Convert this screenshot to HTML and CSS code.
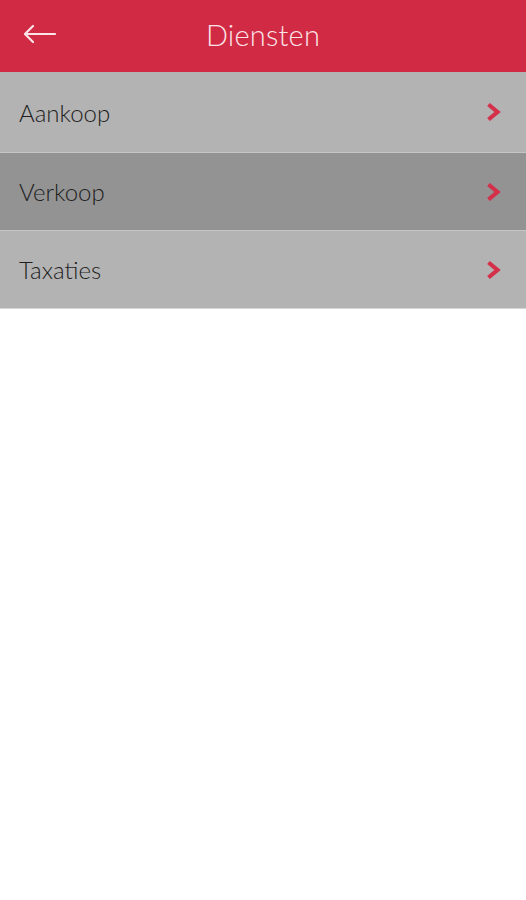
FILE: index.html
```html
<!DOCTYPE html>
<html>
<head>
  <title>Diensten</title>
  <link rel="stylesheet" href="styles.css">
</head>
<body>

<div class="topbar">
  <span class="back">
    <svg width="32" height="20" viewBox="0 0 32 20">
      <path d="M1 10 H31 M1 10 L9 2 M1 10 L9 18" stroke="#fbe3e7" stroke-width="2.2" fill="none" stroke-linecap="round"/>
    </svg>
  </span>
  <h1>Diensten</h1>
</div>

<div class="list">
  <div class="item">
    <span>Aankoop</span>
    <svg class="chev" width="15" height="20" viewBox="0 0 15 20"><path d="M2.5 2.5 L11.5 10 L2.5 17.5" stroke="#d4304a" stroke-width="4.2" fill="none"/></svg>
  </div>
  <div class="item active">
    <span>Verkoop</span>
    <svg class="chev" width="15" height="20" viewBox="0 0 15 20"><path d="M2.5 2.5 L11.5 10 L2.5 17.5" stroke="#d4304a" stroke-width="4.2" fill="none"/></svg>
  </div>
  <div class="item">
    <span>Taxaties</span>
    <svg class="chev" width="15" height="20" viewBox="0 0 15 20"><path d="M2.5 2.5 L11.5 10 L2.5 17.5" stroke="#d4304a" stroke-width="4.2" fill="none"/></svg>
  </div>
</div>

</body>
</html>
```

FILE: styles.css
```css
body {
  margin: 0;
  background: #fff;
  font-family: Lato, "Open Sans", sans-serif;
}

.topbar {
  height: 72px;
  background: #d12a45;
  display: flex;
  align-items: center;
  justify-content: center;
  position: relative;
}

.back {
  position: absolute;
  left: 24px;
  top: 24px;
  height: 20px;
}

.topbar h1 {
  margin: 0 0 3px;
  font-weight: 300;
  font-size: 29px;
  color: #fbe3e7;
  letter-spacing: 0.2px;
}

.item {
  height: 77px;
  background: #b3b3b3;
  display: flex;
  align-items: center;
  justify-content: space-between;
  padding: 0 25px 0 19px;
  border-bottom: 1px solid #c6c6c6;
  font-size: 24px;
  font-weight: 300;
  color: #1e1e1e;
}

.item:first-child {
  height: 80px;
}

.item.active {
  background: #939393;
}

.item:last-child {
  height: 77px;
  border-bottom: 1px solid #d4d4d4;
}
```
